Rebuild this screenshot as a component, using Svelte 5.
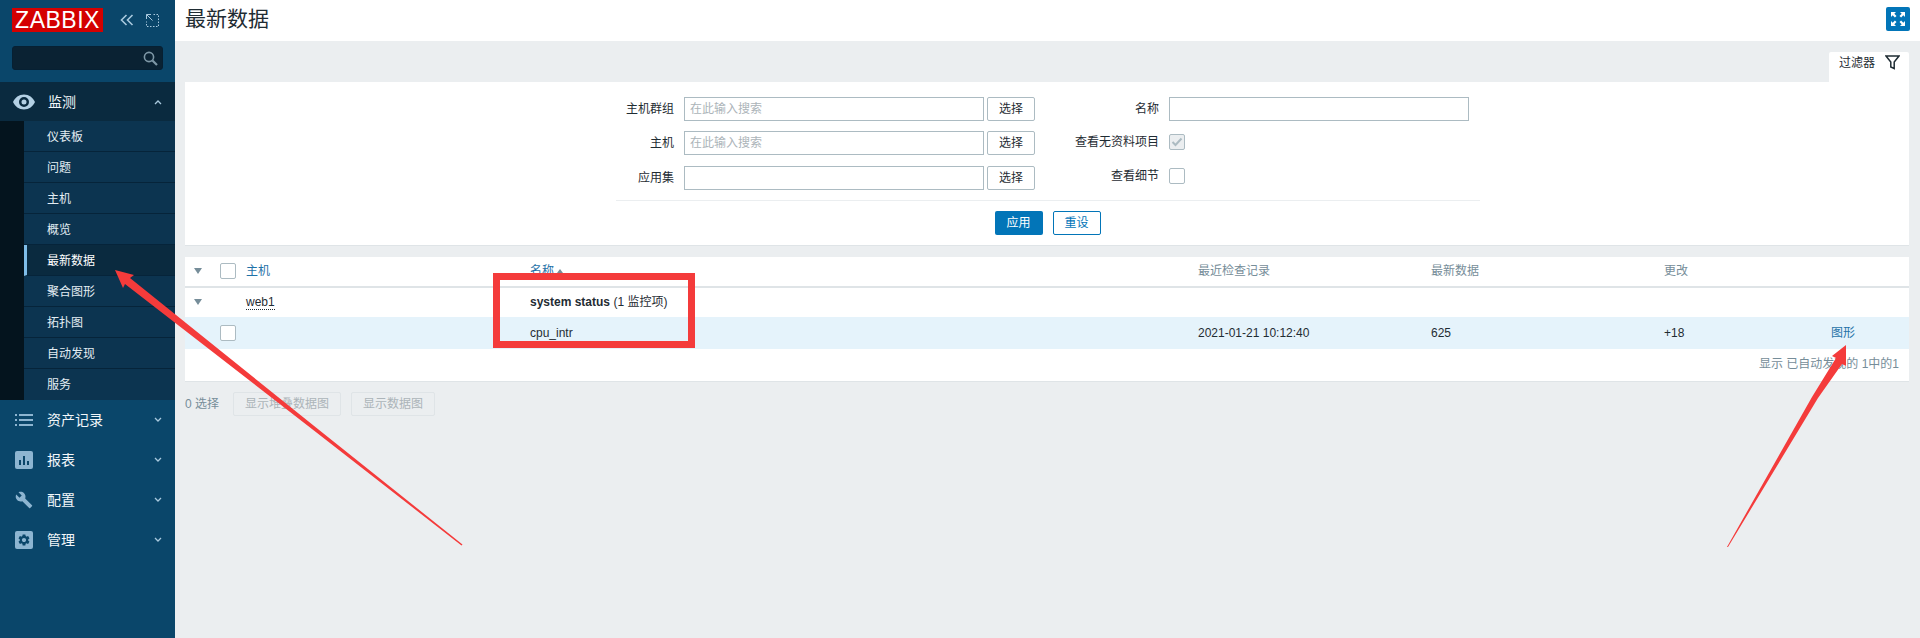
<script>
  const subItems = ['仪表板', '问题', '主机', '概览', '最新数据', '聚合图形', '拓扑图', '自动发现', '服务'];
  const active = '最新数据';
  const filterLeft = [
    { label: '主机群组', placeholder: '在此输入搜索' },
    { label: '主机', placeholder: '在此输入搜索' },
    { label: '应用集', placeholder: '' }
  ];
</script>

<div class="page">
  <aside class="sidebar">
    <div class="brand">
      <div class="logo">ZABBIX</div>
      <div class="brand-tools">
        <svg width="14" height="12" viewBox="0 0 14 12" class="line-icon">
          <path d="M6.5 1 1.5 6l5 5M12.5 1l-5 5 5 5" />
        </svg>
        <svg width="13" height="13" viewBox="0 0 13 13" class="line-icon thin">
          <path d="M5 .5H.5V5M.5 .5l6 6" />
          <path d="M7.5 .5h5v12H.5V7.5" stroke-dasharray="1.5 1.5" />
        </svg>
      </div>
    </div>
    <div class="search">
      <svg width="15" height="15" viewBox="0 0 15 15">
        <circle cx="6" cy="6" r="4.6" fill="none" stroke="#7d97a6" stroke-width="1.6" />
        <path d="M9.5 9.5 14 14" stroke="#7d97a6" stroke-width="2.2" />
      </svg>
    </div>

    <nav>
      <div class="menu-item open">
        <svg class="menu-icon" width="22" height="16" viewBox="0 0 22 16">
          <path fill-rule="evenodd" fill="#b3d0e4" d="M11 .5C6 .5 2 3.600 0 8c2 4.400 6 7.500 11 7.500S20 12.400 22 8C20 3.600 16 .5 11 .5zm0 12.500a5 5 0 1 1 0-10 5 5 0 0 1 0 10zm0-2.500a2.500 2.500 0 1 0 0-5 2.500 2.500 0 0 0 0 5z" />
        </svg>
        <span>监测</span>
        <svg class="chev" width="8" height="6" viewBox="0 0 8 6"><path d="M1 5l3-3 3 3" /></svg>
      </div>
      <div class="sub">
        {#each subItems as item}
          <div class="sub-item" class:selected={item === active}>{item}</div>
        {/each}
      </div>

      <div class="menu-item">
        <svg class="menu-icon" width="18" height="18" viewBox="0 0 18 18" fill="#8db5d1">
          <rect x="0" y="3" width="2" height="2" /><rect x="4" y="3" width="14" height="2" />
          <rect x="0" y="8" width="2" height="2" /><rect x="4" y="8" width="14" height="2" />
          <rect x="0" y="13" width="2" height="2" /><rect x="4" y="13" width="14" height="2" />
        </svg>
        <span>资产记录</span>
        <svg class="chev" width="8" height="6" viewBox="0 0 8 6"><path d="M1 1l3 3 3-3" /></svg>
      </div>
      <div class="menu-item">
        <svg class="menu-icon" width="18" height="18" viewBox="0 0 18 18">
          <rect width="18" height="18" rx="2" fill="#8db5d1" />
          <path fill="#0a466a" d="M4 9h2v5H4zM8 5h2v9H8zM12 10h2v4h-2z" />
        </svg>
        <span>报表</span>
        <svg class="chev" width="8" height="6" viewBox="0 0 8 6"><path d="M1 1l3 3 3-3" /></svg>
      </div>
      <div class="menu-item">
        <svg class="menu-icon" width="18" height="18" viewBox="0 0 24 24">
          <path fill="#8db5d1" d="M22.700 19l-9.100-9.100c.9-2.300.4-5-1.500-6.900-2-2-5-2.400-7.400-1.300L9 6 6 9 1.600 4.700C.4 7.100.9 10.100 2.900 12.100c1.900 1.900 4.600 2.400 6.900 1.500l9.100 9.100c.4.4 1 .4 1.400 0l2.300-2.300c.5-.4.5-1.100.1-1.400z" />
        </svg>
        <span>配置</span>
        <svg class="chev" width="8" height="6" viewBox="0 0 8 6"><path d="M1 1l3 3 3-3" /></svg>
      </div>
      <div class="menu-item">
        <svg class="menu-icon" width="18" height="18" viewBox="0 0 18 18">
          <rect width="18" height="18" rx="2" fill="#8db5d1" />
          <g transform="translate(2 2) scale(.583)">
            <path fill="#0a466a" d="M19.140 12.940c.04-.3.06-.61.06-.94 0-.32-.02-.64-.07-.94l2.030-1.580c.18-.14.23-.41.12-.61l-1.920-3.320c-.12-.22-.37-.29-.59-.22l-2.390.96c-.5-.38-1.030-.7-1.620-.94l-.36-2.540c-.04-.24-.24-.41-.48-.41h-3.840c-.24 0-.43.17-.47.41l-.36 2.540c-.59.24-1.130.57-1.620.94l-2.390-.96c-.22-.08-.47 0-.59.22L2.740 8.870c-.12.21-.08.47.12.61l2.030 1.580c-.05.3-.09.63-.09.94s.02.64.07.94l-2.030 1.580c-.18.14-.23.41-.12.61l1.920 3.320c.12.22.37.29.59.22l2.390-.96c.5.38 1.030.7 1.620.94l.36 2.540c.05.24.24.41.48.41h3.840c.24 0 .44-.17.47-.41l.36-2.540c.59-.24 1.130-.56 1.620-.94l2.390.96c.22.08.47 0 .59-.22l1.920-3.320c.12-.22.07-.47-.12-.61l-2.010-1.580zM12 15.600c-1.980 0-3.600-1.620-3.600-3.600s1.620-3.600 3.600-3.600 3.600 1.620 3.600 3.600-1.620 3.600-3.600 3.600z" />
          </g>
        </svg>
        <span>管理</span>
        <svg class="chev" width="8" height="6" viewBox="0 0 8 6"><path d="M1 1l3 3 3-3" /></svg>
      </div>
    </nav>
  </aside>

  <main>
    <header>
      <h1>最新数据</h1>
      <button class="fullscreen" aria-label="全屏">
        <svg width="16" height="16" viewBox="0 0 16 16" fill="#fff">
          <path d="M1 1h5L4.300 2.700 6.500 4.900 4.900 6.500 2.700 4.300 1 6zM15 1v5l-1.700-1.700-2.200 2.200-1.600-1.600 2.200-2.200L10 1zM1 15v-5l1.700 1.700 2.200-2.200 1.600 1.600-2.200 2.200L6 15zM15 15h-5l1.700-1.700-2.200-2.200 1.600-1.600 2.200 2.200L15 10z" />
        </svg>
      </button>
    </header>

    <div class="content">
      <div class="tab-row">
        <div class="tab">
          <span>过滤器</span>
          <svg width="15" height="15" viewBox="0 0 15 15">
            <path d="M1 1h13L9.200 7v6.500L5.800 12V7z" fill="none" stroke="#1f2c33" stroke-width="1.500" />
          </svg>
        </div>
      </div>

      <section class="filter">
        <div class="filter-form">
          <div class="filter-grid left">
            {#each filterLeft as f}
              <label class="lbl">{f.label}</label>
              <div class="field" class:ph={f.placeholder}>{f.placeholder}</div>
              <button class="pick">选择</button>
            {/each}
          </div>
          <div class="filter-grid right">
            <label class="lbl">名称</label>
            <div class="field"></div>
            <label class="lbl">查看无资料项目</label>
            <div class="check-wrap">
              <span class="check disabled">
                <svg width="12" height="10" viewBox="0 0 12 10"><path d="M1.500 5l3 3 6-6.500" fill="none" stroke="#acbbc2" stroke-width="2" /></svg>
              </span>
            </div>
            <label class="lbl">查看细节</label>
            <div class="check-wrap"><span class="check"></span></div>
          </div>
        </div>
        <div class="filter-actions">
          <button class="apply">应用</button>
          <button class="reset">重设</button>
        </div>
      </section>

      <section class="data">
        <table>
          <colgroup>
            <col style="width:35px" /><col style="width:26px" /><col style="width:284px" /><col style="width:668px" />
            <col style="width:233px" /><col style="width:233px" /><col style="width:167px" /><col style="width:78px" />
          </colgroup>
          <thead>
            <tr>
              <th><span class="tri"></span></th>
              <th><span class="check"></span></th>
              <th class="link">主机</th>
              <th class="link">名称 <span class="sort"></span></th>
              <th>最近检查记录</th>
              <th>最新数据</th>
              <th>更改</th>
              <th></th>
            </tr>
          </thead>
          <tbody>
            <tr class="group">
              <td><span class="tri"></span></td>
              <td></td>
              <td><span class="host">web1</span></td>
              <td colspan="5"><b>system status</b> (1 监控项)</td>
            </tr>
            <tr class="item">
              <td></td>
              <td><span class="check"></span></td>
              <td></td>
              <td>cpu_intr</td>
              <td>2021-01-21 10:12:40</td>
              <td>625</td>
              <td>+18</td>
              <td class="link">图形</td>
            </tr>
          </tbody>
        </table>
        <div class="paging">显示 已自动发现的 1中的1</div>
      </section>

      <div class="actions">
        <span class="count">0 选择</span>
        <button class="off">显示堆叠数据图</button>
        <button class="off">显示数据图</button>
      </div>
    </div>
  </main>

  <!-- red annotations drawn on top of the screenshot -->
  <svg class="marks" width="1920" height="638" viewBox="0 0 1920 638">
    <rect x="496.500" y="276.500" width="195" height="68" fill="none" stroke="#f43b3b" stroke-width="7" />
    <polygon fill="#f43b3b" points="115,270 134,275 130,278 316,427.500 462.500,544.500 461.500,545.500 313.900,430.500 125,284 123,288" />
    <polygon fill="#f43b3b" points="1846,345 1832,356 1836,358 1812,397 1727,547 1728,547 1818,398 1842,364 1846,366" />
  </svg>
</div>

<style>
  :global(body) {
    margin: 0;
  }

  .page {
    position: relative;
    display: flex;
    width: 1920px;
    height: 638px;
    overflow: hidden;
    font: 12px/16px "Liberation Sans", "Noto Sans CJK SC", sans-serif;
    color: #1f2c33;
    background: #ebeef0;
  }

  button {
    font: inherit;
    box-sizing: border-box;
    height: 24px;
    padding: 0;
    border-radius: 2px;
    background: #fff;
    cursor: pointer;
  }

  .sidebar {
    flex: 0 0 175px;
    background: #0a466a;
    color: #f2f7fa;
  }

  .brand {
    display: flex;
    align-items: center;
    height: 24px;
    padding: 8px 0 0 12px;
  }

  .logo {
    width: 91px;
    height: 24px;
    background: #d40000;
    color: #fff;
    font-size: 23px;
    line-height: 24px;
    letter-spacing: .5px;
    text-align: center;
  }

  .brand-tools {
    display: flex;
    align-items: center;
    gap: 12px;
    margin-left: 17px;
  }

  .line-icon {
    fill: none;
    stroke: #a9c9de;
    stroke-width: 1.6;
  }

  .line-icon.thin {
    stroke-width: 1;
  }

  .search {
    box-sizing: border-box;
    display: flex;
    align-items: center;
    justify-content: flex-end;
    width: 151px;
    height: 24px;
    margin: 14px 0 12px 12px;
    padding-right: 4px;
    background: #0a2233;
    border: 1px solid #062033;
    border-radius: 3px;
  }

  .menu-item {
    display: flex;
    align-items: center;
    height: 40px;
    padding-left: 15px;
    font-size: 14px;
  }

  .menu-item span {
    margin-left: 14px;
    font-size: 14px;
  }

  .menu-item .chev {
    margin-left: auto;
    margin-right: 13px;
    fill: none;
    stroke: #a9c9de;
    stroke-width: 1.300;
  }

  .menu-item.open {
    height: 39px;
    padding-left: 13px;
    background: #0a2a3f;
  }

  .menu-item.open span {
    margin-left: 13px;
  }

  .sub {
    padding-left: 24px;
    background: #04141e;
  }

  .sub-item {
    box-sizing: border-box;
    height: 31px;
    padding: 8px 0 0 23px;
    background: #0c3450;
    border-bottom: 1px solid #06243a;
    color: #e3edf3;
  }

  .sub-item:last-child {
    border-bottom: 0;
  }

  .sub-item.selected {
    padding-left: 20px;
    background: #0a2a3f;
    border-left: 3px solid #7fbde8;
    color: #fff;
  }

  main {
    flex: 1;
    display: flex;
    flex-direction: column;
    min-width: 0;
  }

  header {
    display: flex;
    align-items: center;
    justify-content: space-between;
    height: 41px;
    padding: 0 10px;
    background: #fff;
  }

  h1 {
    margin: 0 0 3px;
    font-size: 21px;
    line-height: 30px;
    font-weight: 400;
    color: #1f2c33;
  }

  .fullscreen {
    display: flex;
    align-items: center;
    justify-content: center;
    width: 24px;
    margin-bottom: 3px;
    background: #0275b8;
    border: 0;
  }

  .content {
    padding: 11px 11px 0 10px;
  }

  .tab-row {
    display: flex;
    justify-content: flex-end;
  }

  .tab {
    box-sizing: border-box;
    display: flex;
    gap: 10px;
    width: 80px;
    height: 30px;
    padding: 3px 0 0 10px;
    background: #fff;
    border-radius: 2px 2px 0 0;
  }

  .filter {
    box-sizing: border-box;
    height: 164px;
    padding-top: 15px;
    background: #fff;
    border-bottom: 1px solid #dfe4e7;
  }

  .filter-form {
    display: flex;
    box-sizing: border-box;
    width: 864px;
    height: 104px;
    margin-left: 431px;
    border-bottom: 1px solid #ebeef0;
  }

  .filter-grid {
    display: grid;
    align-items: center;
    grid-auto-rows: 24px;
    align-content: start;
  }

  .filter-grid.left {
    grid-template-columns: 58px 300px 48px;
    column-gap: 10px;
    row-gap: 10.250px;
    width: 434px;
  }

  .filter-grid.left .pick {
    margin-left: -7px;
  }

  .filter-grid.right {
    grid-template-columns: 109px 300px;
    column-gap: 10px;
    row-gap: 9.250px;
  }

  .lbl {
    text-align: right;
  }

  .field {
    box-sizing: border-box;
    height: 24px;
    padding: 3px 5px;
    background: #fff;
    border: 1px solid #acbbc2;
    color: #acb4b9;
  }

  .pick {
    width: 48px;
    border: 1px solid #acbbc2;
    color: #1f2c33;
  }

  .check-wrap {
    display: flex;
  }

  .check {
    box-sizing: border-box;
    display: inline-flex;
    align-items: center;
    justify-content: center;
    width: 16px;
    height: 16px;
    background: #fff;
    border: 1px solid #acbbc2;
    border-radius: 2px;
    vertical-align: middle;
  }

  .check.disabled {
    background: #ebeef0;
  }

  .filter-actions {
    display: flex;
    justify-content: center;
    gap: 10px;
    padding-top: 10px;
    margin-left: 1px;
  }

  .apply {
    width: 48px;
    background: #0275b8;
    border: 0;
    color: #fff;
  }

  .reset {
    width: 48px;
    border: 1px solid #0275b8;
    color: #0275b8;
  }

  .data {
    margin-top: 11px;
    background: #fff;
    border-bottom: 1px solid #dfe4e7;
  }

  table {
    width: 1724px;
    table-layout: fixed;
    border-collapse: collapse;
  }

  th,
  td {
    padding: 0;
    text-align: left;
    font-weight: 400;
    vertical-align: middle;
  }

  thead tr {
    height: 30px;
    border-bottom: 2px solid #dfe4e7;
  }

  th {
    padding-bottom: 2px;
    color: #768d99;
  }

  .link {
    color: #1f72a8;
  }

  .group {
    height: 30px;
  }

  .group td {
    padding-bottom: 2px;
  }

  .item {
    height: 32px;
    background: #e5f3fb;
  }

  .tri {
    display: block;
    width: 0;
    height: 0;
    margin-left: 9px;
    border-left: 4.500px solid transparent;
    border-right: 4.500px solid transparent;
    border-top: 6px solid #768d99;
  }

  .sort {
    display: inline-block;
    width: 0;
    height: 0;
    margin-bottom: 2px;
    border-left: 3.500px solid transparent;
    border-right: 3.500px solid transparent;
    border-bottom: 4px solid #768d99;
  }

  .host {
    color: #1f2c33;
    border-bottom: 1px dotted #1f2c33;
  }

  .paging {
    height: 32px;
    padding: 7px 10px 0 0;
    box-sizing: border-box;
    text-align: right;
    color: #768d99;
  }

  .actions {
    display: flex;
    align-items: center;
    gap: 10px;
    margin-top: 10px;
  }

  .count {
    width: 38px;
    color: #768d99;
  }

  .off {
    padding: 0 11px;
    background: #ebeef0;
    border: 1px solid #dfe4e7;
    color: #acb4b9;
  }

  .marks {
    position: absolute;
    left: 0;
    top: 0;
    pointer-events: none;
  }
</style>
